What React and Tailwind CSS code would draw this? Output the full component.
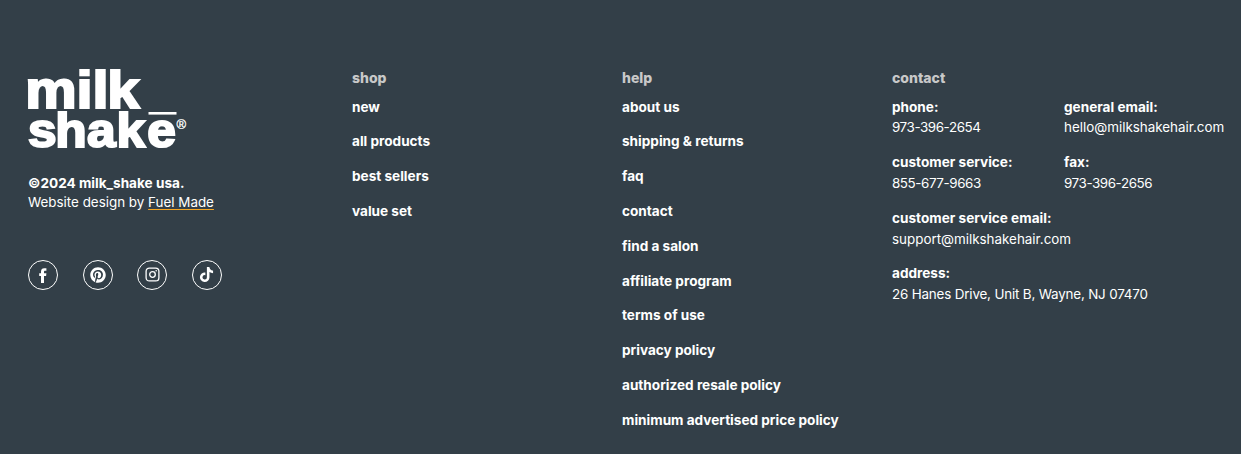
import React from 'react';
import { FaPinterest, FaTiktok } from 'react-icons/fa';

const shopLinks = ['new', 'all products', 'best sellers', 'value set'];

const helpLinks = [
    'about us',
    'shipping & returns',
    'faq',
    'contact',
    'find a salon',
    'affiliate program',
    'terms of use',
    'privacy policy',
    'authorized resale policy',
    'minimum advertised price policy',
];

const contactItems = [
    { label: 'phone:', value: '973-396-2654', spacing: 'tracking-[-0.42px]' },
    { label: 'general email:', value: 'hello@milkshakehair.com' },
    { label: 'customer service:', value: '855-677-9663', spacing: 'tracking-[-0.42px]' },
    { label: 'fax:', value: '973-396-2656', spacing: 'tracking-[-0.42px]' },
    { label: 'customer service email:', value: 'support@milkshakehair.com', wide: true },
    { label: 'address:', value: '26 Hanes Drive, Unit B, Wayne, NJ 07470', spacing: 'tracking-[-0.17px]', wide: true },
];

const Logo = () => (
    <svg width="160" height="82" viewBox="0 0 160 82" fill="#fff" stroke="#fff" className="block overflow-visible font-['Liberation_Sans',sans-serif] font-bold">
        <text x="-2.6 44.1 58.6 72" y="39" fontSize="52.5" strokeWidth="2.2" transform="scale(1.1 1)">milk</text>
        <text x="0.1 26 56.2 84.4 113.5" y="78" fontSize="49" strokeWidth="2.2" transform="scale(1.05 1)">shake</text>
        <rect x="120.5" y="43" width="28" height="2.6" stroke="none" />
        <text x="148.5" y="60" fontSize="13" fontWeight="400" strokeWidth="0.3">®</text>
    </svg>
);

const FacebookIcon = () => (
    <svg width="8" height="15" viewBox="0 0 8 15" fill="#fff" className="mt-0.5">
        <path d="M2 15V8H0.2V5.2H2V3.6C2 1.3 3.2 0.2 5.2 0.2H7.4V2.8H6.1C5.3 2.8 5 3.2 5 3.9V5.2H7.4L7.1 8H5V15Z" />
    </svg>
);

const InstagramIcon = () => (
    <svg width="15" height="15" viewBox="0 0 15 15" fill="none" stroke="#fff" strokeWidth="1.3">
        <rect x="1.1" y="1.1" width="12.8" height="12.8" rx="3.2" />
        <circle cx="7.5" cy="7.5" r="2.8" />
        <circle cx="11.2" cy="3.8" r="0.8" fill="#fff" stroke="none" />
    </svg>
);

const SocialLink = ({ label, children }) => (
    <a href="#" aria-label={label} className="flex size-[30px] items-center justify-center rounded-full border border-white">
        {children}
    </a>
);

const ColumnTitle = ({ children }) => (
    <h2 className="mb-2 text-[14px] font-extrabold leading-[20.8px] text-[#c8c8c8]">{children}</h2>
);

const LinkColumn = ({ title, links }) => (
    <div className="w-[270px]">
        <ColumnTitle>{title}</ColumnTitle>
        <ul className="flex flex-col gap-3.5">
            {links.map((label) => (
                <li key={label} className="text-[13.6px] leading-[20.8px]">
                    <a href="#" className="font-bold">{label}</a>
                </li>
            ))}
        </ul>
    </div>
);

const App = () => {
    return (
        <footer className="flex h-[454px] w-[1241px] overflow-hidden whitespace-nowrap bg-[#333f48] pl-7 pt-[67.8px] font-['Inter',sans-serif] text-[13.4px] text-white">
            <div className="w-[324px] pt-[1.2px]">
                <Logo />
                <div className="mt-[23px] leading-[19px]">
                    <p className="text-[13.6px] font-bold">©2024 milk_shake usa.</p>
                    <p>
                        Website design by{' '}
                        <a href="#" className="underline decoration-[#f5a623] decoration-1 underline-offset-2">Fuel Made</a>
                    </p>
                </div>
                <div className="mt-12 flex gap-[24.67px]">
                    <SocialLink label="Facebook"><FacebookIcon /></SocialLink>
                    <SocialLink label="Pinterest"><FaPinterest size={16} /></SocialLink>
                    <SocialLink label="Instagram"><InstagramIcon /></SocialLink>
                    <SocialLink label="TikTok"><FaTiktok size={15} /></SocialLink>
                </div>
            </div>

            <LinkColumn title="shop" links={shopLinks} />
            <LinkColumn title="help" links={helpLinks} />

            <div>
                <ColumnTitle>contact</ColumnTitle>
                <div className="grid grid-cols-[172px_170px] gap-y-3.5 leading-[20.8px]">
                    {contactItems.map((item) => (
                        <div key={item.label} className={item.wide ? 'col-span-2' : ''}>
                            <p className="text-[13.6px] font-bold">{item.label}</p>
                            <p className={item.spacing}>{item.value}</p>
                        </div>
                    ))}
                </div>
            </div>
        </footer>
    );
};

export default App;
